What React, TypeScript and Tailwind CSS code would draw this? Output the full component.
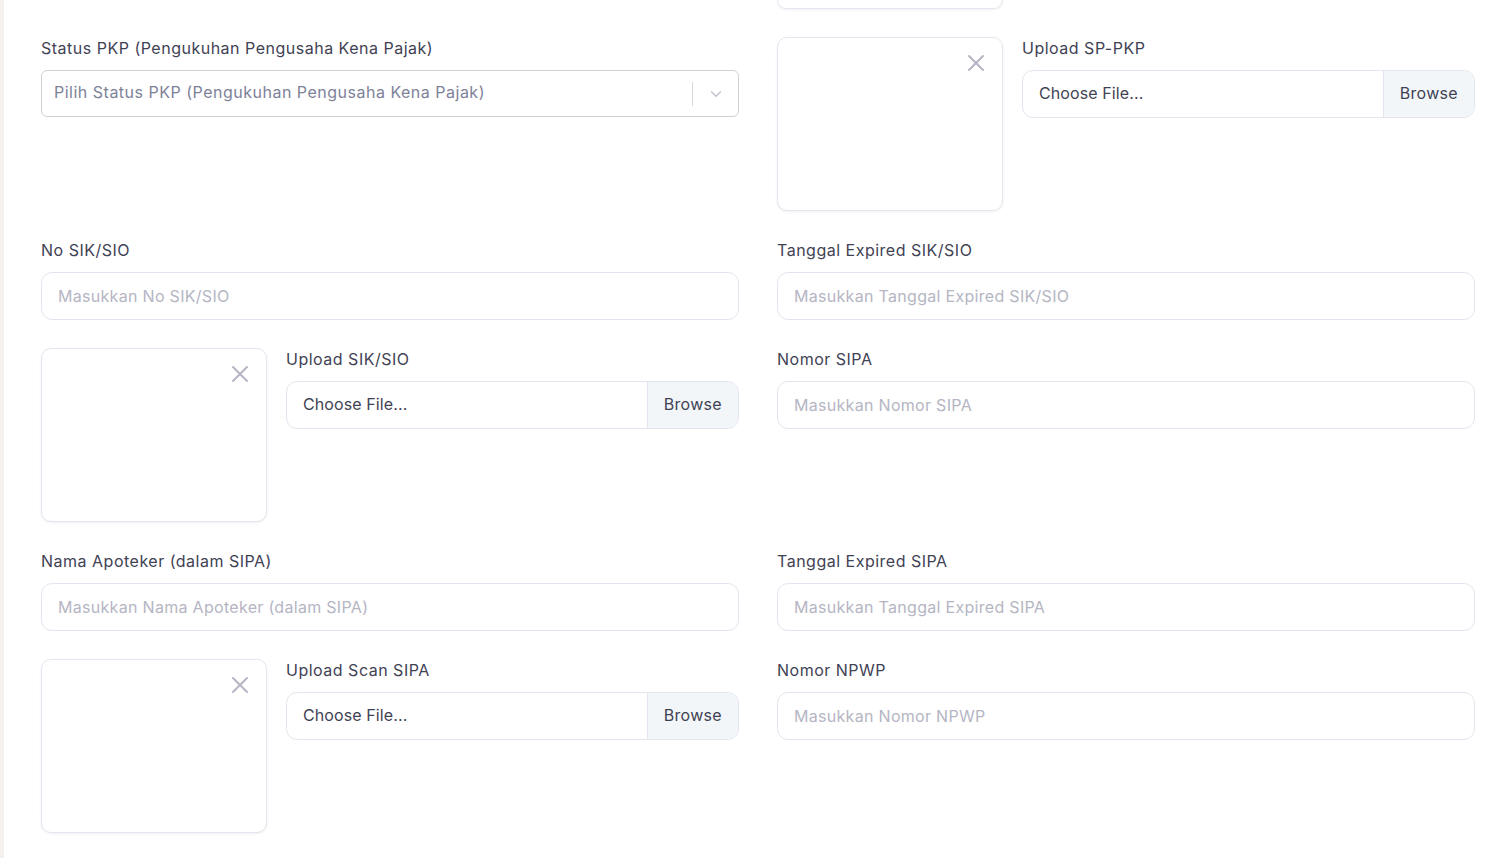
import { X, ChevronDown } from "lucide-react";

const font = { fontFamily: "Inter, 'Noto Sans', sans-serif" };

const Label = ({ text }: { text: string }) => (
  <label className="block text-[16px] tracking-[0.5px] leading-[22px] mb-[11px] text-[#3f4254]">{text}</label>
);

const TextField = ({ label, placeholder }: { label: string; placeholder: string }) => (
  <div>
    <Label text={label} />
    <input
      placeholder={placeholder}
      className="w-full h-[48px] rounded-[11px] border border-[#e4e6ef] px-[16px] pb-[1px] text-[16px] tracking-[0.3px] text-[#3f4254] placeholder:text-[#b5b5c3] outline-none"
    />
  </div>
);

const SelectField = ({ label, placeholder }: { label: string; placeholder: string }) => (
  <div>
    <Label text={label} />
    <div className="flex items-center h-[47px] rounded-[6px] border border-[#cfd1d6] bg-white">
      <span className="flex-1 pl-[12px] pb-[3px] text-[16px] tracking-[0.5px] text-[#7e8299]">{placeholder}</span>
      <div className="h-[24px] w-px bg-[#d6d8dd]" />
      <div className="w-[45px] flex justify-center text-[#c4c6cc]">
        <ChevronDown size={18} strokeWidth={2} />
      </div>
    </div>
  </div>
);

const Preview = () => (
  <div className="relative w-[226px] h-[174px] shrink-0 rounded-[10px] border border-[#e4e6ef] bg-white shadow-[0_1px_3px_rgba(0,0,0,0.06)]">
    <button className="absolute right-[12px] top-[11px] text-[#b5b5c3]">
      <X size={28} strokeWidth={1.7} />
    </button>
  </div>
);

const UploadField = ({ label }: { label: string }) => (
  <div className="flex gap-[19px]">
    <Preview />
    <div className="flex-1">
      <Label text={label} />
      <div className="flex h-[48px] rounded-[11px] border border-[#e4e6ef] overflow-hidden">
        <span className="flex-1 flex items-center pl-[16px] pb-[2px] text-[16px] tracking-[0.1px] text-[#3f4254]">Choose File...</span>
        <span className="flex items-center px-[16px] pb-[2px] bg-[#f3f6f9] border-l border-[#e4e6ef] text-[16px] tracking-[0.3px] text-[#3f4254]">
          Browse
        </span>
      </div>
    </div>
  </div>
);

export default function App() {
  return (
    <div className="flex h-[858px] overflow-hidden bg-white" style={font}>
      <div className="w-[4px] shrink-0 bg-[#f5f1ec]" />
      <div className="flex-1 pl-[37px] pr-[27px]">
        <div className="grid grid-cols-2 gap-x-[38px] gap-y-[28px]">
          <div />
          <div className="h-[9px] w-[226px] rounded-b-[10px] border-x border-b border-[#e4e6ef] shadow-[0_1px_3px_rgba(0,0,0,0.06)]" />

          <SelectField
            label="Status PKP (Pengukuhan Pengusaha Kena Pajak)"
            placeholder="Pilih Status PKP (Pengukuhan Pengusaha Kena Pajak)"
          />
          <UploadField label="Upload SP-PKP" />

          <TextField label="No SIK/SIO" placeholder="Masukkan No SIK/SIO" />
          <TextField label="Tanggal Expired SIK/SIO" placeholder="Masukkan Tanggal Expired SIK/SIO" />

          <UploadField label="Upload SIK/SIO" />
          <TextField label="Nomor SIPA" placeholder="Masukkan Nomor SIPA" />

          <TextField label="Nama Apoteker (dalam SIPA)" placeholder="Masukkan Nama Apoteker (dalam SIPA)" />
          <TextField label="Tanggal Expired SIPA" placeholder="Masukkan Tanggal Expired SIPA" />

          <UploadField label="Upload Scan SIPA" />
          <TextField label="Nomor NPWP" placeholder="Masukkan Nomor NPWP" />
        </div>
      </div>
    </div>
  );
}
